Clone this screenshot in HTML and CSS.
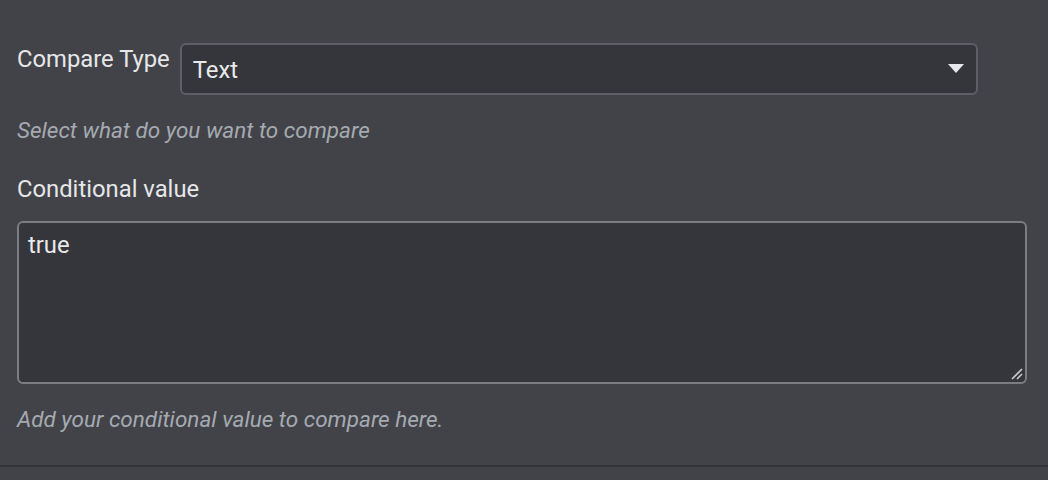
FILE: index.html
```html
<!DOCTYPE html>
<html>
<head>
<meta charset="utf-8">
<link rel="stylesheet" href="styles.css">
</head>
<body>
<div class="panel">
  <div class="field">
    <div class="row">
      <label class="label">Compare Type</label>
      <div class="select">
        <span class="select-value">Text</span>
        <svg class="caret" width="16" height="10" viewBox="0 0 16 10"><path d="M0 0 H16 L8 9 Z" fill="#e8e9eb"/></svg>
      </div>
    </div>
    <p class="help">Select what do you want to compare</p>
  </div>
  <div class="field">
    <label class="label block">Conditional value</label>
    <div class="textarea">
      <span class="ta-value">true</span>
      <svg class="grip" width="12" height="12" viewBox="0 0 12 12"><path d="M1 11 L11 1 M6 11 L11 6" stroke="#c9cbce" stroke-width="1.6"/></svg>
    </div>
    <p class="help">Add your conditional value to compare here.</p>
  </div>
</div>
<div class="divider"></div>
</body>
</html>
```

FILE: styles.css
```css
html, body {
  margin: 0;
  padding: 0;
  background: #424348;
  font-family: Roboto, "Noto Sans", sans-serif;
  color: #e6e7e9;
}
.panel {
  padding: 43px 21px 33px 17px;
}
.row {
  display: flex;
  align-items: flex-start;
  gap: 10px;
}
.label {
  font-size: 23.8px;
  line-height: 32px;
  color: #e6e7e9;
}
.label.block {
  display: block;
  margin-bottom: 16px;
}
.select {
  width: 798px;
  height: 52px;
  box-sizing: border-box;
  border: 2px solid #5c5f65;
  border-radius: 6px;
  background: #35363b;
  display: flex;
  align-items: center;
  justify-content: space-between;
  padding: 0 12px 0 11px;
}
.select-value {
  font-size: 23.8px;
  color: #e8e9eb;
  padding-top: 1px;
}
.caret {
  display: block;
}
.help {
  margin: 22px 0 0 0;
  font-size: 22.5px;
  line-height: 26px;
  font-style: italic;
  color: #a5aab1;
}
.field + .field {
  margin-top: 30px;
}
.textarea {
  position: relative;
  width: 1010px;
  height: 163px;
  box-sizing: border-box;
  border: 2px solid #7a7d82;
  border-radius: 6px;
  background: #35363b;
  padding: 8px 9px;
}
.ta-value {
  font-size: 23.8px;
  line-height: 28px;
  color: #e8e9eb;
}
.grip {
  position: absolute;
  right: 2px;
  bottom: 2px;
}
.divider {
  height: 2px;
  background: #323337;
}
```
